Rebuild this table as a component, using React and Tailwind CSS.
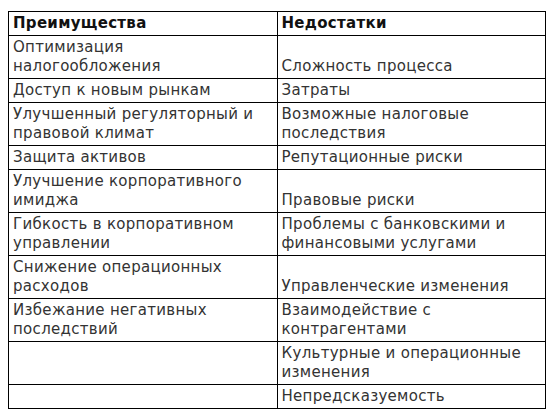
const rows = [
  ['Оптимизация налогообложения', 'Сложность процесса'],
  ['Доступ к новым рынкам', 'Затраты'],
  ['Улучшенный регуляторный и правовой климат', 'Возможные налоговые последствия'],
  ['Защита активов', 'Репутационные риски'],
  ['Улучшение корпоративного имиджа', 'Правовые риски'],
  ['Гибкость в корпоративном управлении', 'Проблемы с банковскими и финансовыми услугами'],
  ['Снижение операционных расходов', 'Управленческие изменения'],
  ['Избежание негативных последствий', 'Взаимодействие с контрагентами'],
  ['', 'Культурные и операционные изменения'],
  ['', 'Непредсказуемость'],
]

export default function App() {
  return (
    <div className="min-h-screen bg-white pt-[11px] pl-[8px]" style={{ fontFamily: '"DejaVu Sans", sans-serif' }}>
      <table className="w-[538px] table-fixed border-collapse text-[15px] leading-[19px] tracking-[0.3px] text-[#333]">
        <thead>
          <tr>
            <th className="border border-black px-[4px] py-[2px] text-left align-bottom font-bold text-[#111]">Преимущества</th>
            <th className="border border-black px-[4px] py-[2px] text-left align-bottom font-bold text-[#111]">Недостатки</th>
          </tr>
        </thead>
        <tbody>
          {rows.map((r, i) => (
            <tr key={i}>
              <td className="border border-black px-[4px] py-[2px] align-bottom">{r[0]}</td>
              <td className="border border-black px-[4px] py-[2px] align-bottom">{r[1]}</td>
            </tr>
          ))}
        </tbody>
      </table>
    </div>
  )
}
